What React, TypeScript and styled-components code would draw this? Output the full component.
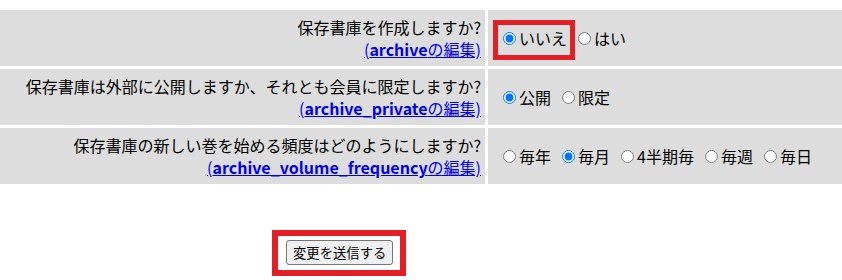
import React from "react";
import styled, { createGlobalStyle } from "styled-components";

const Global = createGlobalStyle`
  html, body { margin: 0; padding: 0; background: #fff; }
  body {
    font-family: "Noto Sans CJK JP", "Noto Sans", sans-serif;
    font-size: 16px;
    color: #000;
  }
`;

const Form = styled.form`
  padding-top: 10px;
`;

const Grid = styled.div`
  display: grid;
  grid-template-columns: 485px 1fr;
  grid-auto-rows: 56px;
  gap: 3px;
`;

const Question = styled.div`
  background: #dddddd;
  text-align: right;
  padding: 6px 4px 6px 4px;
  line-height: 22px;
  box-sizing: border-box;
`;

const EditLink = styled.a`
  color: #0000ee;
  text-decoration: underline;
  b { font-weight: 700; }
`;

const Answer = styled.div`
  background: #dddddd;
  display: flex;
  align-items: center;
  padding-left: 10px;
  line-height: 22px;
`;

const Option = styled.label<{ $highlight?: boolean }>`
  position: relative;
  display: inline-flex;
  align-items: center;
  margin-right: 6px;
  ${(p) =>
    p.$highlight &&
    `
    &::after {
      content: "";
      position: absolute;
      left: -5px;
      right: -8px;
      top: -7px;
      bottom: -11px;
      border: 5px solid #e31e24;
      pointer-events: none;
    }
  `}
`;

const Radio = styled.input`
  width: 13px;
  height: 13px;
  margin: 0 3px 0 5px;
`;

const SubmitRow = styled.div`
  margin-top: 46px;
  padding-left: 272px;
`;

const Highlight = styled.div`
  display: inline-block;
  border: 6px solid #e31e24;
  padding: 4px 7px 5px 8px;
`;

const Button = styled.button`
  display: block;
  font-family: "Noto Sans CJK JP", sans-serif;
  font-size: 13.333px;
  line-height: 21px;
  padding: 1px 6px;
  border: 1px solid #767676;
  border-radius: 3px;
  background: #efefef;
  color: #000;
`;

type Q = {
  text: string;
  key: string;
  name: string;
  options: string[];
  checked: number;
  highlight?: number;
};

const questions: Q[] = [
  {
    text: "保存書庫を作成しますか?",
    key: "archive",
    name: "archive",
    options: ["いいえ", "はい"],
    checked: 0,
    highlight: 0,
  },
  {
    text: "保存書庫は外部に公開しますか、それとも会員に限定しますか?",
    key: "archive_private",
    name: "archive_private",
    options: ["公開", "限定"],
    checked: 0,
  },
  {
    text: "保存書庫の新しい巻を始める頻度はどのようにしますか?",
    key: "archive_volume_frequency",
    name: "archive_volume_frequency",
    options: ["毎年", "毎月", "4半期毎", "毎週", "毎日"],
    checked: 1,
  },
];

export default function App() {
  return (
    <>
      <Global />
      <Form onSubmit={(e) => e.preventDefault()}>
        <Grid>
          {questions.map((q) => (
            <React.Fragment key={q.key}>
              <Question>
                <div>{q.text}</div>
                <EditLink href="#">
                  (<b>{q.key}</b>の編集)
                </EditLink>
              </Question>
              <Answer>
                {q.options.map((o, i) => (
                  <Option key={o} $highlight={q.highlight === i}>
                    <Radio
                      type="radio"
                      name={q.name}
                      defaultChecked={q.checked === i}
                    />
                    {o}
                  </Option>
                ))}
              </Answer>
            </React.Fragment>
          ))}
        </Grid>
        <SubmitRow>
          <Highlight>
            <Button type="submit">変更を送信する</Button>
          </Highlight>
        </SubmitRow>
      </Form>
    </>
  );
}
